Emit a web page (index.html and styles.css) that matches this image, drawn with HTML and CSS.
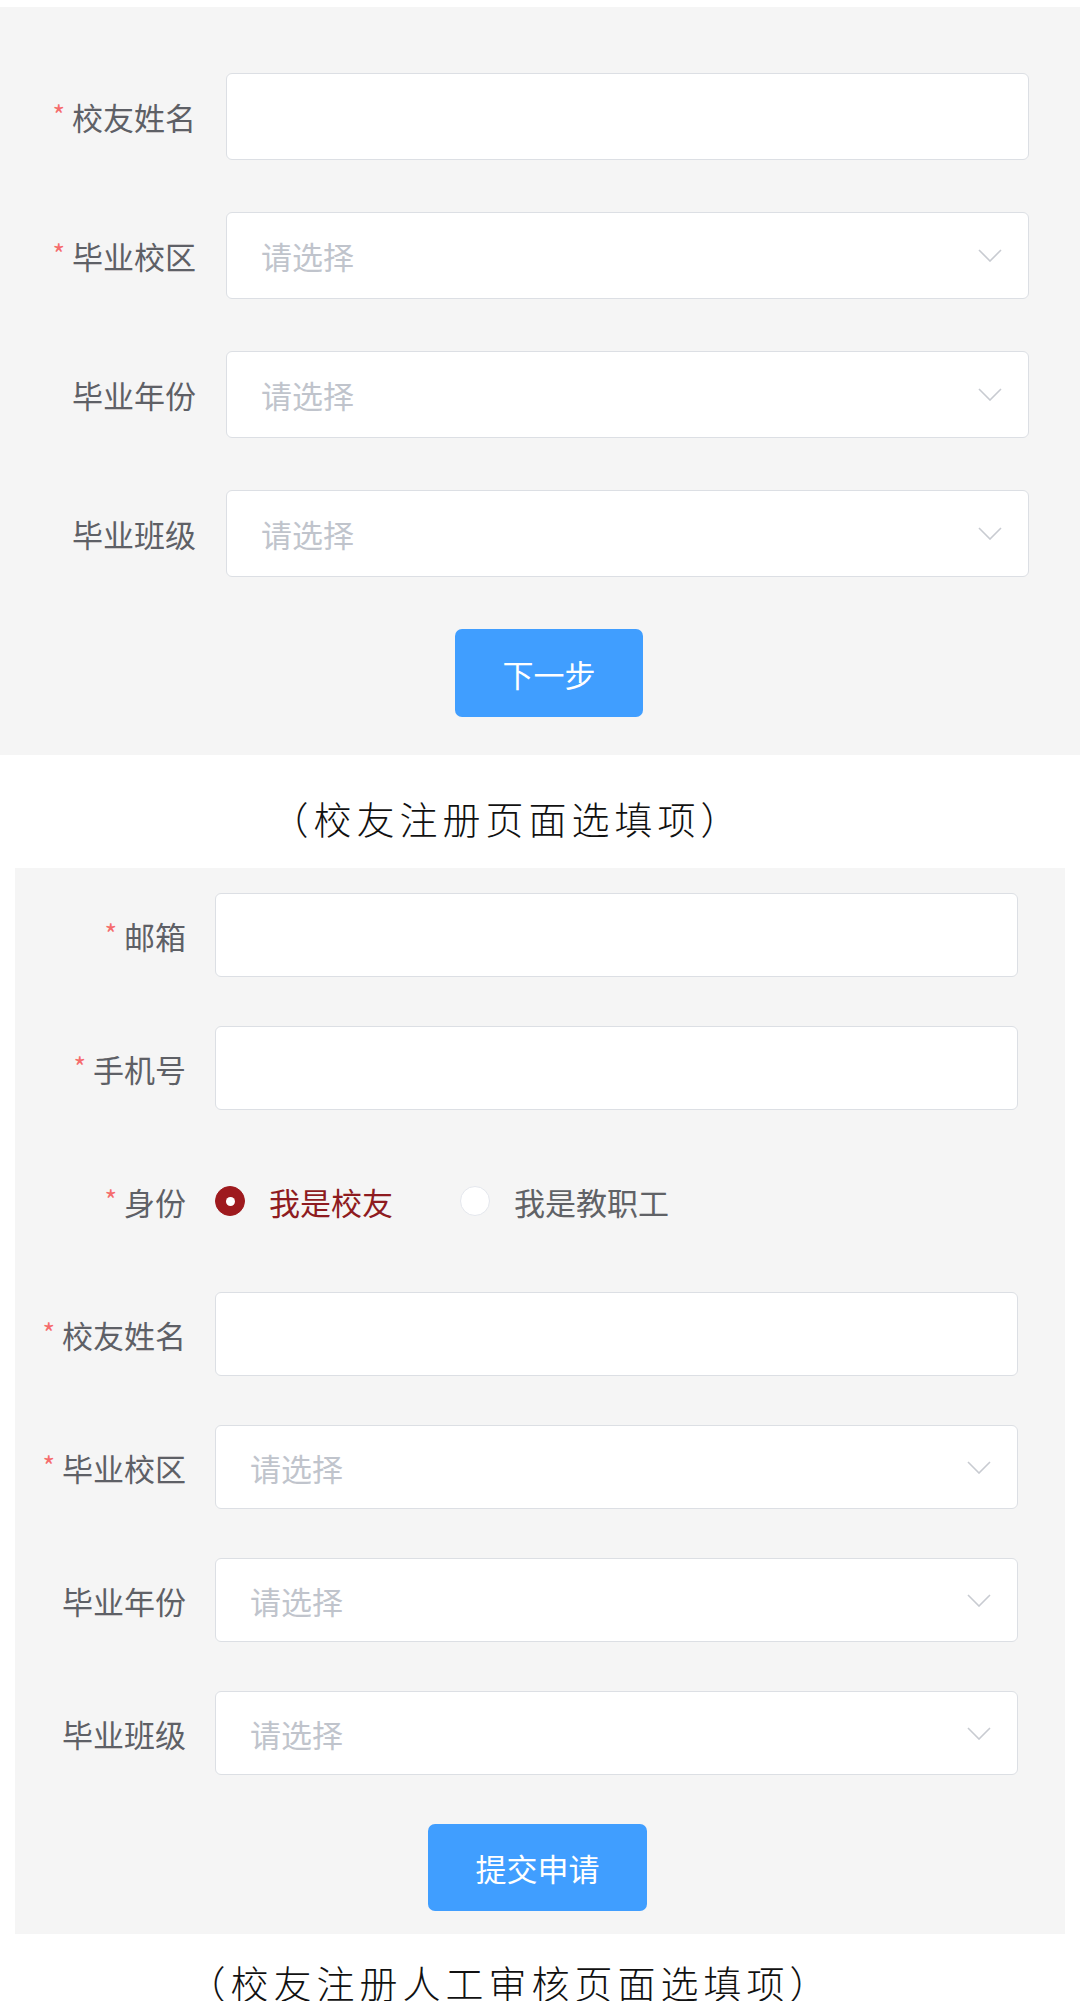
FILE: index.html
```html
<!DOCTYPE html>
<html lang="zh-CN">

<head>
    <meta charset="UTF-8">
    <meta name="viewport" content="width=device-width, initial-scale=1.0">
    <title>校友注册</title>
    <link rel="stylesheet" href="styles.css">
</head>

<body>
    <!-- 校友注册 -->
    <form class="panel panel-first">
        <div class="form-item">
            <label class="form-label"><span class="required">*</span>校友姓名</label>
            <input class="form-control" type="text">
        </div>
        <div class="form-item">
            <label class="form-label"><span class="required">*</span>毕业校区</label>
            <div class="form-control select">
                <span class="placeholder">请选择</span>
                <svg class="arrow" width="24" height="13" viewBox="0 0 24 13"><polyline points="1,1 12,12 23,1" /></svg>
            </div>
        </div>
        <div class="form-item">
            <label class="form-label">毕业年份</label>
            <div class="form-control select">
                <span class="placeholder">请选择</span>
                <svg class="arrow" width="24" height="13" viewBox="0 0 24 13"><polyline points="1,1 12,12 23,1" /></svg>
            </div>
        </div>
        <div class="form-item">
            <label class="form-label">毕业班级</label>
            <div class="form-control select">
                <span class="placeholder">请选择</span>
                <svg class="arrow" width="24" height="13" viewBox="0 0 24 13"><polyline points="1,1 12,12 23,1" /></svg>
            </div>
        </div>
        <div class="form-actions">
            <button type="button" class="btn btn-next">下一步</button>
        </div>
    </form>

    <p class="caption caption-first">（校友注册页面选填项）</p>

    <!-- 人工审核 -->
    <form class="panel panel-second">
        <div class="form-item">
            <label class="form-label"><span class="required">*</span>邮箱</label>
            <input class="form-control" type="text">
        </div>
        <div class="form-item">
            <label class="form-label"><span class="required">*</span>手机号</label>
            <input class="form-control" type="text">
        </div>
        <div class="form-item">
            <label class="form-label"><span class="required">*</span>身份</label>
            <div class="radio-group">
                <span class="radio is-checked"><span class="radio-inner"></span><span class="radio-label">我是校友</span></span>
                <span class="radio"><span class="radio-inner"></span><span class="radio-label">我是教职工</span></span>
            </div>
        </div>
        <div class="form-item">
            <label class="form-label"><span class="required">*</span>校友姓名</label>
            <input class="form-control" type="text">
        </div>
        <div class="form-item">
            <label class="form-label"><span class="required">*</span>毕业校区</label>
            <div class="form-control select">
                <span class="placeholder">请选择</span>
                <svg class="arrow" width="24" height="13" viewBox="0 0 24 13"><polyline points="1,1 12,12 23,1" /></svg>
            </div>
        </div>
        <div class="form-item">
            <label class="form-label">毕业年份</label>
            <div class="form-control select">
                <span class="placeholder">请选择</span>
                <svg class="arrow" width="24" height="13" viewBox="0 0 24 13"><polyline points="1,1 12,12 23,1" /></svg>
            </div>
        </div>
        <div class="form-item">
            <label class="form-label">毕业班级</label>
            <div class="form-control select">
                <span class="placeholder">请选择</span>
                <svg class="arrow" width="24" height="13" viewBox="0 0 24 13"><polyline points="1,1 12,12 23,1" /></svg>
            </div>
        </div>
        <div class="form-actions">
            <button type="button" class="btn btn-submit">提交申请</button>
        </div>
    </form>

    <p class="caption caption-second">（校友注册人工审核页面选填项）</p>
</body>

</html>
```

FILE: styles.css
```css
body {
    margin: 0;
    background-color: white;
    font-family: "Noto Sans CJK SC", "Noto Sans", sans-serif;
    color: #606266;
}

.panel {
    display: block;
    background-color: #f5f5f5;
}

.panel-first {
    margin-top: 7px;
    padding: 66px 0 38px;
}

.panel-second {
    margin: 0 15px;
    padding: 25px 0 23px;
}

.form-item {
    display: flex;
    align-items: center;
}

.panel-first .form-item {
    height: 87px;
    margin-bottom: 52px;
}

.panel-second .form-item {
    height: 84px;
    margin-bottom: 49px;
}

.form-label {
    flex: none;
    font-size: 31px;
    text-align: right;
    color: #5e6066;
}

.panel-first .form-label {
    width: 196px;
    margin-right: 30px;
}

.panel-second .form-label {
    width: 171px;
    margin-right: 29px;
}

.required {
    color: #f56c6c;
    font-size: 27px;
    margin-right: 7px;
    vertical-align: 4px;
}

.form-control {
    box-sizing: border-box;
    width: 803px;
    height: 100%;
    margin: 0;
    border: 1px solid #dcdfe4;
    border-radius: 6px;
    background-color: white;
    font-family: inherit;
    font-size: 31px;
    outline: none;
}

.select {
    display: flex;
    align-items: center;
    justify-content: space-between;
    padding: 0 26px 0 34px;
}

.placeholder {
    color: #c0c4cc;
    font-size: 31px;
}

.arrow polyline {
    fill: none;
    stroke: #c8cbd1;
    stroke-width: 1.6;
}

/* radio */
.radio-group {
    display: flex;
    align-items: center;
}

.radio {
    display: inline-flex;
    align-items: center;
    margin-right: 67px;
}

.radio-inner {
    box-sizing: border-box;
    width: 30px;
    height: 30px;
    border: 1px solid #e4e7ed;
    border-radius: 50%;
    background-color: white;
    display: flex;
    align-items: center;
    justify-content: center;
}

.radio-label {
    margin-left: 24px;
    font-size: 31px;
    color: #606266;
}

.radio.is-checked .radio-inner {
    border-color: #9e1a1e;
    background-color: #9e1a1e;
}

.radio.is-checked .radio-inner::after {
    content: '';
    width: 9px;
    height: 9px;
    border-radius: 50%;
    background-color: white;
}

.radio.is-checked .radio-label {
    color: #8e1b20;
}

/* buttons */
.form-actions {
    display: flex;
    justify-content: center;
}

.panel-first .form-actions {
    padding-left: 18px;
}

.panel-second .form-actions {
    padding-right: 5px;
}

.btn {
    border: none;
    border-radius: 7px;
    background-color: #409eff;
    color: white;
    font-family: inherit;
    font-size: 31px;
}

.btn-next {
    width: 188px;
    height: 88px;
}

.btn-submit {
    width: 219px;
    height: 87px;
}

/* captions */
.caption {
    font-size: 38px;
    line-height: 38px;
    font-weight: 300;
    color: #111;
    text-align: center;
}

.caption-first {
    margin: 44px 0 31px;
    padding-right: 66px;
    letter-spacing: 5px;
}

.caption-second {
    margin: 29px 0 0;
    padding-right: 60px;
    letter-spacing: 5px;
}
```
